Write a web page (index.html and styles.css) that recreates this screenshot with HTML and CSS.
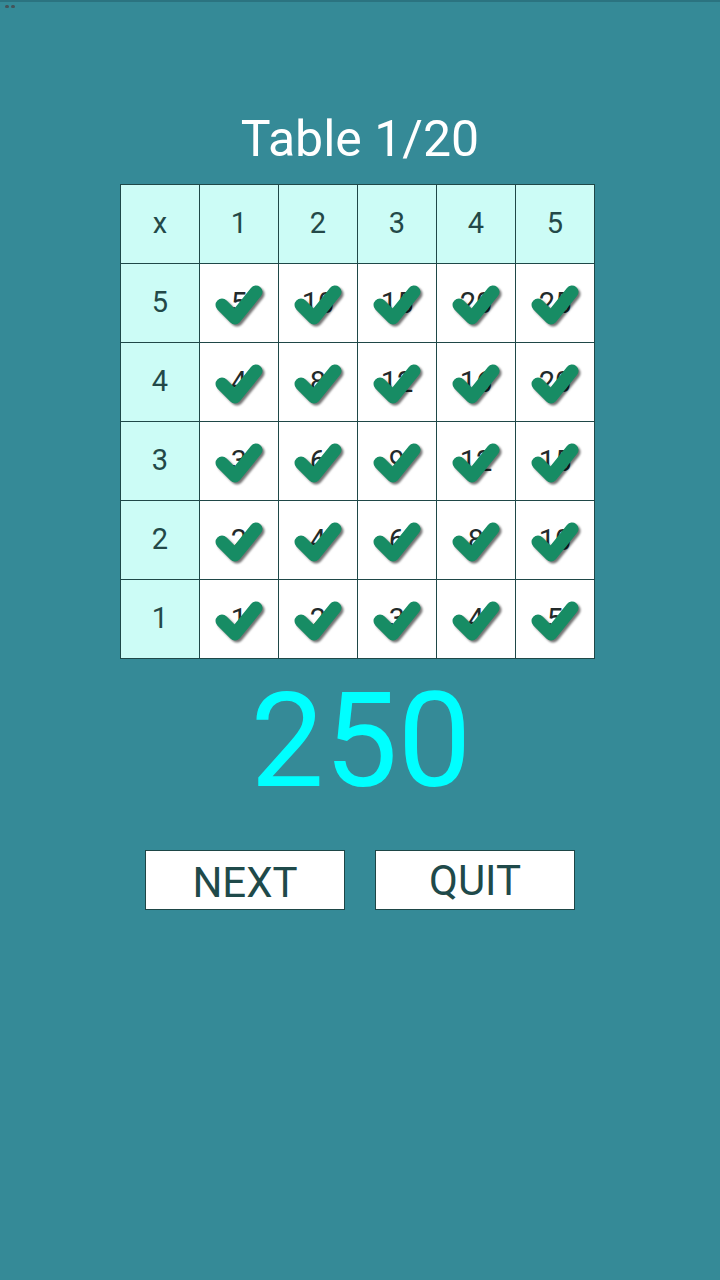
FILE: index.html
```html
<!DOCTYPE html>
<html>
<head>
<meta charset="utf-8">
<link rel="stylesheet" href="styles.css">
</head>
<body>
<div class="status"><span class="dot"></span><span class="dot"></span></div>
<h1 class="title">Table 1/20</h1>
<svg width="0" height="0" class="defs">
  <defs>
    <symbol id="chk" viewBox="0 0 78 78">
      <path d="M22 41 L35 54 L56 28" fill="none" stroke="#178c64" stroke-width="13" stroke-linecap="round" stroke-linejoin="round"/>
    </symbol>
  </defs>
</svg>
<div class="board">
  <div class="cell head">x</div>
  <div class="cell head">1</div>
  <div class="cell head">2</div>
  <div class="cell head">3</div>
  <div class="cell head">4</div>
  <div class="cell head">5</div>

  <div class="cell head">5</div>
  <div class="cell"><span>5</span><svg class="check"><use href="#chk"/></svg></div>
  <div class="cell"><span>10</span><svg class="check"><use href="#chk"/></svg></div>
  <div class="cell"><span>15</span><svg class="check"><use href="#chk"/></svg></div>
  <div class="cell"><span>20</span><svg class="check"><use href="#chk"/></svg></div>
  <div class="cell"><span>25</span><svg class="check"><use href="#chk"/></svg></div>

  <div class="cell head">4</div>
  <div class="cell"><span>4</span><svg class="check"><use href="#chk"/></svg></div>
  <div class="cell"><span>8</span><svg class="check"><use href="#chk"/></svg></div>
  <div class="cell"><span>12</span><svg class="check"><use href="#chk"/></svg></div>
  <div class="cell"><span>16</span><svg class="check"><use href="#chk"/></svg></div>
  <div class="cell"><span>20</span><svg class="check"><use href="#chk"/></svg></div>

  <div class="cell head">3</div>
  <div class="cell"><span>3</span><svg class="check"><use href="#chk"/></svg></div>
  <div class="cell"><span>6</span><svg class="check"><use href="#chk"/></svg></div>
  <div class="cell"><span>9</span><svg class="check"><use href="#chk"/></svg></div>
  <div class="cell"><span>12</span><svg class="check"><use href="#chk"/></svg></div>
  <div class="cell"><span>15</span><svg class="check"><use href="#chk"/></svg></div>

  <div class="cell head">2</div>
  <div class="cell"><span>2</span><svg class="check"><use href="#chk"/></svg></div>
  <div class="cell"><span>4</span><svg class="check"><use href="#chk"/></svg></div>
  <div class="cell"><span>6</span><svg class="check"><use href="#chk"/></svg></div>
  <div class="cell"><span>8</span><svg class="check"><use href="#chk"/></svg></div>
  <div class="cell"><span>10</span><svg class="check"><use href="#chk"/></svg></div>

  <div class="cell head">1</div>
  <div class="cell"><span>1</span><svg class="check"><use href="#chk"/></svg></div>
  <div class="cell"><span>2</span><svg class="check"><use href="#chk"/></svg></div>
  <div class="cell"><span>3</span><svg class="check"><use href="#chk"/></svg></div>
  <div class="cell"><span>4</span><svg class="check"><use href="#chk"/></svg></div>
  <div class="cell"><span>5</span><svg class="check"><use href="#chk"/></svg></div>
</div>
<div class="score">250</div>
<div class="buttons">
  <div class="btn next">NEXT</div>
  <div class="btn quit">QUIT</div>
</div>
</body>
</html>
```
FILE: styles.css
```css
html, body {
  margin: 0;
  padding: 0;
}
body {
  width: 720px;
  height: 1280px;
  background: #358a97;
  font-family: Roboto, "Noto Sans", sans-serif;
  overflow: hidden;
}
.status {
  height: 3px;
  display: flex;
  gap: 2px;
  padding: 3px 0 0 5px;
  border-top: 2px solid #2b7380;
}
.dot {
  width: 4px;
  height: 3px;
  border-radius: 2px;
  background: #44545a;
}
.defs {
  position: absolute;
}
.title {
  margin: 0;
  padding-top: 99px;
  height: 77px;
  text-align: center;
  color: #ffffff;
  font-weight: 400;
  font-size: 50px;
  line-height: 64px;
}
.board {
  margin-left: 120px;
  width: 475px;
  display: grid;
  grid-template-columns: repeat(6, 79px);
  grid-auto-rows: 79px;
  border-top: 1px solid #1f4848;
  border-left: 1px solid #1f4848;
  box-sizing: border-box;
}
.cell {
  position: relative;
  background: #ffffff;
  border-right: 1px solid #1f4848;
  border-bottom: 1px solid #1f4848;
  display: flex;
  align-items: center;
  justify-content: center;
  font-size: 29px;
  color: #222a2a;
}
.cell.head {
  background: #ccfcf6;
  color: #234848;
  padding-bottom: 2px;
  box-sizing: border-box;
}
.check {
  position: absolute;
  left: 0;
  top: 0;
  width: 78px;
  height: 78px;
  filter: drop-shadow(2px 2px 1.2px rgba(0, 0, 0, 0.55));
}
.score {
  text-align: center;
  color: #00ffff;
  font-size: 131px;
  line-height: 160px;
  margin-top: 2px;
  padding-left: 2px;
}
.buttons {
  display: flex;
  gap: 30px;
  margin-top: 29px;
  padding-left: 145px;
}
.btn {
  width: 200px;
  height: 60px;
  box-sizing: border-box;
  background: #ffffff;
  border: 1px solid #1d4646;
  color: #1f4a4a;
  font-size: 42px;
  display: flex;
  align-items: center;
  justify-content: center;
}
.btn.next {
  padding-top: 4px;
}
```
